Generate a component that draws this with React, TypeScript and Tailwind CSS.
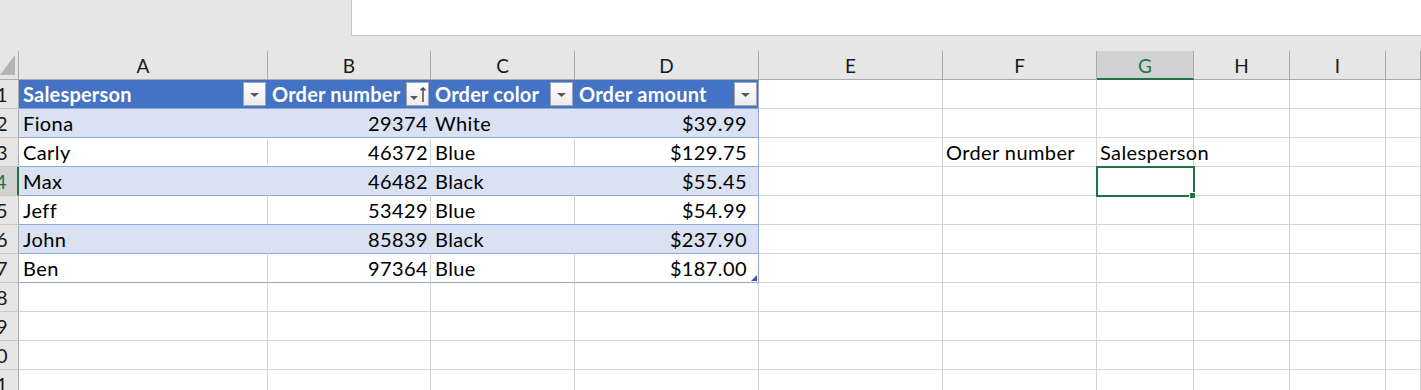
import React from 'react';

const font = "font-['Lato','Liberation_Sans',sans-serif]";

const cols = [
  { l: 'A', w: 'w-[249px]' },
  { l: 'B', w: 'w-[163px]' },
  { l: 'C', w: 'w-[144px]' },
  { l: 'D', w: 'w-[184px]' },
  { l: 'E', w: 'w-[184px]' },
  { l: 'F', w: 'w-[154px]' },
  { l: 'G', w: 'w-[97px]' },
  { l: 'H', w: 'w-[96px]' },
  { l: 'I', w: 'w-[96px]' },
  { l: '', w: 'flex-1' },
];

const headers = ['Salesperson', 'Order number', 'Order color', 'Order amount'];

const orders = [
  ['Fiona', '29374', 'White', '$39.99'],
  ['Carly', '46372', 'Blue', '$129.75'],
  ['Max', '46482', 'Black', '$55.45'],
  ['Jeff', '53429', 'Blue', '$54.99'],
  ['John', '85839', 'Black', '$237.90'],
  ['Ben', '97364', 'Blue', '$187.00'],
];

function FilterButton({ sorted }: { sorted?: boolean }) {
  return (
    <div className="mr-[1px] w-[23px] h-[24px] shrink-0 border border-[#a6a6a6] bg-gradient-to-b from-white to-[#ececec]">
      <svg width="21" height="22" viewBox="0 0 21 22">
        {sorted ? (
          <>
            <polygon points="3,13 11,13 7,17" fill="#595959" />
            <path d="M16 19V5M13.5 7.5L16 5L18.5 7.5" stroke="#404040" strokeWidth="1.4" fill="none" />
          </>
        ) : (
          <polygon points="6,10 15,10 10.5,14" fill="#595959" />
        )}
      </svg>
    </div>
  );
}

function ColumnHeader() {
  return (
    <div className="flex h-[29px] bg-[#e6e6e6]">
      <div className="w-[19px] h-full border-r border-b border-[#ababab] flex items-start">
        <svg width="18" height="28" viewBox="0 0 18 28">
          <polygon points="15,4 15,24 0,24" fill="#b4b4b4" />
        </svg>
      </div>
      {cols.map((c) =>
        c.l === 'G' ? (
          <div
            key={c.l}
            className={`${c.w} h-full bg-[#d2d2d2] border-r border-r-[#ababab] border-b-2 border-b-[#217346] flex justify-center pt-[3px] text-[19px] leading-[24px] text-[#217346]`}
          >
            {c.l}
          </div>
        ) : (
          <div
            key={c.l || 'end'}
            className={`${c.w} h-full border-r border-b border-[#ababab] flex justify-center pt-[3px] text-[19px] leading-[24px] text-[#1a1a1a]`}
          >
            {c.l}
          </div>
        )
      )}
    </div>
  );
}

function RowHeader({ n, active }: { n: number; active?: boolean }) {
  return (
    <div
      className={`w-[19px] h-full shrink-0 overflow-hidden whitespace-nowrap flex justify-end pr-[10px] border-b border-b-[#c8c8c8] ${
        active
          ? 'bg-[#d2d2d2] text-[#217346] border-r-2 border-r-[#217346]'
          : 'bg-[#e6e6e6] text-[#1a1a1a] border-r border-r-[#ababab]'
      }`}
    >
      {n}
    </div>
  );
}

function Row({ n }: { n: number }) {
  const inTable = n <= 7;
  const banded = n % 2 === 0;
  return (
    <div className="flex h-[29px] text-[20px] leading-[28px] tracking-[0.4px]">
      <RowHeader n={n} active={n === 4} />
      {cols.map((c, i) => {
        const key = c.l || 'end';
        if (inTable && i < 4) {
          const right = i === 3 ? 'border-r-[#8ea9db]' : n === 1 ? 'border-r-[#4472c4]' : banded ? 'border-r-[#d9e1f2]' : 'border-r-[#d4d4d4]';
          if (n === 1) {
            return (
              <div key={key} className={`${c.w} h-full flex items-center bg-[#4472c4] border-r ${right} border-b border-b-[#8ea9db]`}>
                <span className="flex-1 pl-[4px] text-white font-bold tracking-[0.2px] whitespace-nowrap overflow-hidden">{headers[i]}</span>
                <FilterButton sorted={i === 1} />
              </div>
            );
          }
          const v = orders[n - 2][i];
          const num = i === 1 || i === 3;
          return (
            <div
              key={key}
              className={`${c.w} h-full relative border-r ${right} border-b border-b-[#8ea9db] whitespace-nowrap text-black ${
                banded ? 'bg-[#d9e1f2]' : 'bg-white'
              } ${num ? 'text-right' : 'pl-[4px]'} ${i === 1 ? 'pr-[2px]' : ''} ${i === 3 ? 'pr-[11px]' : ''}`}
            >
              {v}
              {n === 7 && i === 3 && (
                <svg className="absolute right-0 bottom-0" width="7" height="7" viewBox="0 0 7 7">
                  <polygon points="6,0 6,6 0,6" fill="#3f51b5" />
                </svg>
              )}
            </div>
          );
        }
        let text = '';
        if (n === 3 && c.l === 'F') text = 'Order number';
        if (n === 3 && c.l === 'G') text = 'Salesperson';
        return (
          <div
            key={key}
            className={`${c.w} h-full relative bg-white border-r border-b border-[#d4d4d4] pl-[3px] whitespace-nowrap text-black ${
              text === 'Salesperson' ? 'overflow-visible z-10' : ''
            }`}
          >
            {text}
            {n === 4 && c.l === 'G' && (
              <div className="absolute -left-[1px] -top-[1px] w-[99px] h-[31px] border-2 border-[#217346] z-20">
                <div className="absolute -right-[3px] -bottom-[4px] w-[7px] h-[7px] bg-[#217346] border border-white" />
              </div>
            )}
          </div>
        );
      })}
    </div>
  );
}

export default function App() {
  return (
    <div className={`w-[1421px] h-[390px] overflow-hidden bg-[#e6e6e6] ${font}`}>
      <div className="flex h-[36px]">
        <div className="w-[351px]" />
        <div className="flex-1 bg-white border-l border-b border-[#c6c6c6]" />
      </div>
      <div className="h-[15px]" />
      <ColumnHeader />
      {Array.from({ length: 11 }, (_, k) => (
        <Row key={k} n={k + 1} />
      ))}
    </div>
  );
}
